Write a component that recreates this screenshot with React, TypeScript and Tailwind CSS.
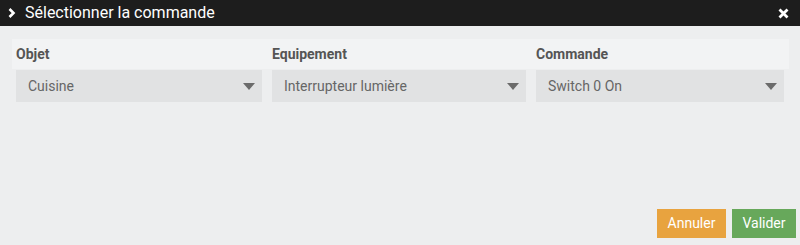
const fields = [
  { label: "Objet", value: "Cuisine", width: "w-[246px]" },
  { label: "Equipement", value: "Interrupteur lumière", width: "w-[254px]" },
  { label: "Commande", value: "Switch 0 On", width: "w-[248px]" },
];

const Caret = () => (
  <svg width="12" height="7" viewBox="0 0 12 7" className="shrink-0">
    <path d="M0 0 H12 L6 7 Z" fill="#6b6b6b" />
  </svg>
);

export default function App() {
  return (
    <div className="w-[800px] h-[245px] bg-[#edeeef] flex flex-col font-['Roboto',sans-serif] overflow-hidden">
      <div className="h-[26px] bg-[#1d1d1d] flex items-center pl-[8px] pr-[11px] text-white shrink-0">
        <svg width="8" height="10" viewBox="0 0 8 10" className="mr-[9px]">
          <path d="M1.5 1 L5.5 5 L1.5 9" stroke="white" strokeWidth="2.6" fill="none" />
        </svg>
        <span className="text-[16px] leading-none">Sélectionner la commande</span>
        <svg width="11" height="11" viewBox="0 0 11 11" className="ml-auto">
          <path d="M1.5 1.5 L9.5 9.5 M9.5 1.5 L1.5 9.5" stroke="white" strokeWidth="2.8" />
        </svg>
      </div>

      <div className="px-[12px] pt-[13px]">
        <div className="bg-[#f2f3f4] h-[30px] w-[777px] pl-[4px] flex gap-[10px] items-center">
          {fields.map((f) => (
            <div key={f.label} className={`${f.width} text-[14px] font-bold text-[#555]`}>
              {f.label}
            </div>
          ))}
        </div>
        <div className="flex gap-[10px] pl-[4px] mt-[1px]">
          {fields.map((f) => (
            <div
              key={f.label}
              className={`${f.width} h-[32px] bg-[#e1e2e3] flex items-center pl-[12px] pr-[7px] text-[14px] text-[#666]`}
            >
              <span className="flex-1">{f.value}</span>
              <Caret />
            </div>
          ))}
        </div>
      </div>

      <div className="mt-auto flex justify-end gap-[6px] pr-[4px] pb-[7px]">
        <button className="w-[69px] h-[29px] bg-[#e8a33f] text-white text-[14px]">Annuler</button>
        <button className="w-[64px] h-[29px] bg-[#67a85b] text-white text-[14px]">Valider</button>
      </div>
    </div>
  );
}
